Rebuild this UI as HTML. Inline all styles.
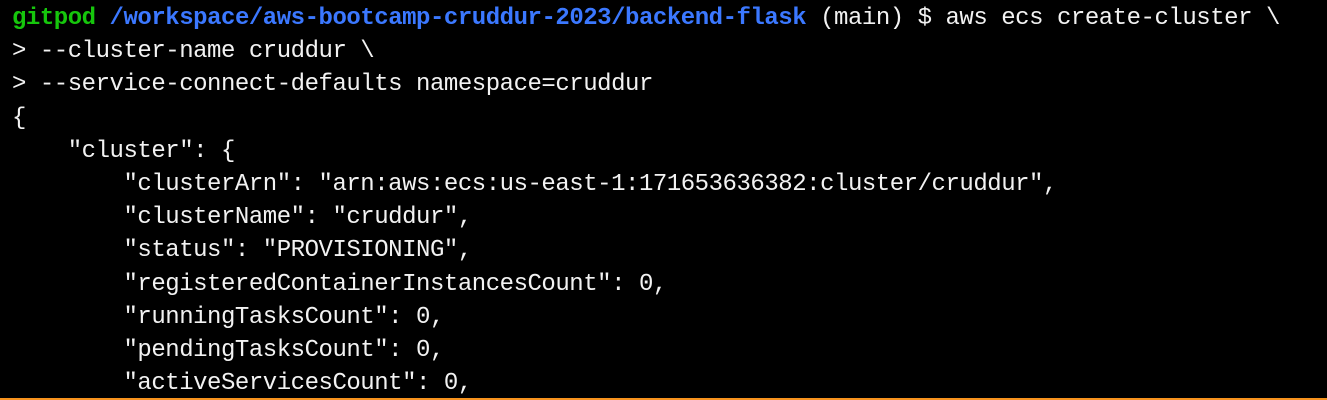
<!DOCTYPE html>
<html><head><style>
html,body{margin:0;padding:0;background:#000;width:1327px;height:400px;overflow:hidden}
pre{margin:0;position:absolute;left:12px;top:2px;font-family:"Liberation Mono",monospace;font-size:24px;line-height:33.2px;color:#f2f2f2;letter-spacing:-0.47px}
.g{color:#16c60c;font-weight:bold}.b{color:#3b78ff;font-weight:bold}
.line{position:absolute;left:0;top:398px;width:1327px;height:2px;background:#f7931e}
</style></head><body>
<pre><span class="g">gitpod</span> <span class="b">/workspace/aws-bootcamp-cruddur-2023/backend-flask</span> (main) $ aws ecs create-cluster \
&gt; --cluster-name cruddur \
&gt; --service-connect-defaults namespace=cruddur
{
    "cluster": {
        "clusterArn": "arn:aws:ecs:us-east-1:171653636382:cluster/cruddur",
        "clusterName": "cruddur",
        "status": "PROVISIONING",
        "registeredContainerInstancesCount": 0,
        "runningTasksCount": 0,
        "pendingTasksCount": 0,
        "activeServicesCount": 0,</pre>
<div class="line"></div>
</body></html>
